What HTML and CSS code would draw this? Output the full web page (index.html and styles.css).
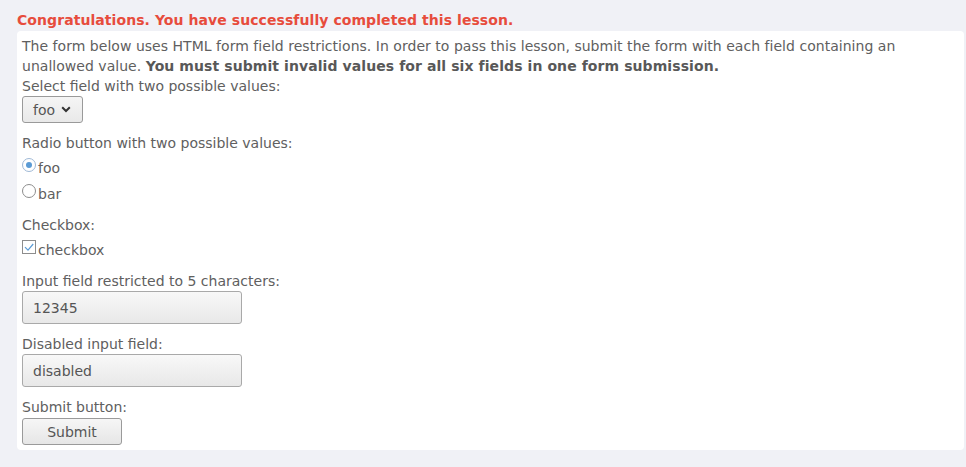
FILE: index.html
```html
<!DOCTYPE html>
<html lang="en">
<head>
<meta charset="utf-8">
<title>HTML Field Restrictions</title>
<link rel="stylesheet" href="styles.css">
</head>
<body>
<h2 class="feedback">Congratulations. You have successfully completed this lesson.</h2>
<div class="panel">
  <p class="intro">The form below uses HTML form field restrictions. In order to pass this lesson, submit the form with each field containing an unallowed value. <b>You must submit invalid values for all six fields in one form submission.</b></p>
  <form class="form">
    <div class="group">
      <div class="label">Select field with two possible values:</div>
      <div class="select"><span>foo</span><svg class="chev" width="10" height="7" viewBox="0 0 10 7"><path d="M1.2 1.3 L5 5 L8.8 1.3" fill="none" stroke="#333" stroke-width="2"/></svg></div>
    </div>
    <div class="group">
      <div class="label">Radio button with two possible values:</div>
      <label class="row"><span class="radio checked"></span><span>foo</span></label>
      <label class="row"><span class="radio"></span><span>bar</span></label>
    </div>
    <div class="group">
      <div class="label">Checkbox:</div>
      <label class="row"><span class="check"><svg width="10" height="9" viewBox="0 0 10 9"><path d="M1 4.2 L4 7.2 L9.2 1" fill="none" stroke="#5b9bd5" stroke-width="1.2"/></svg></span><span>checkbox</span></label>
    </div>
    <div class="group">
      <div class="label">Input field restricted to 5 characters:</div>
      <div class="field">12345</div>
    </div>
    <div class="group">
      <div class="label">Disabled input field:</div>
      <div class="field">disabled</div>
    </div>
    <div class="group last">
      <div class="label">Submit button:</div>
      <div class="button">Submit</div>
    </div>
  </form>
</div>
</body>
</html>
```
FILE: styles.css
```css
html, body {
  margin: 0;
  padding: 0;
}
body {
  background: #f0f1f6;
  font-family: "DejaVu Sans", sans-serif;
  font-size: 14px;
  line-height: 20px;
  color: #606060;
  padding: 10px 2px 16px 17px;
}
.feedback {
  margin: 0 0 1px 0;
  font-size: 14px;
  line-height: 20px;
  font-weight: bold;
  letter-spacing: 0.07px;
  color: #e74c3c;
}
.panel {
  background: #fff;
  border-radius: 4px;
  padding: 5px 5px 5px 5px;
}
.intro {
  margin: 0;
  letter-spacing: 0.03px;
}
.intro b {
  color: #585858;
  letter-spacing: 0.08px;
}
.form {
  margin: 0;
}
.group {
  margin-bottom: 10px;
}
.group.last {
  margin-bottom: 0;
}
.label {
  line-height: 20px;
}
.select {
  display: inline-flex;
  align-items: center;
  box-sizing: border-box;
  width: 61px;
  height: 27px;
  padding: 0 0 0 10px;
  border: 1px solid #9a9a9a;
  border-radius: 3px;
  background: linear-gradient(#f5f5f5, #e9e9e9);
  color: #555;
}
.select .chev {
  margin-left: 6px;
}
.row {
  display: flex;
  align-items: flex-start;
  padding-top: 5px;
  height: 21px;
}
.row span:last-child {
  line-height: 20px;
}
.radio {
  box-sizing: border-box;
  width: 14px;
  height: 14px;
  border: 1px solid #8d8d8d;
  border-radius: 50%;
  margin-right: 2px;
  background: #fff;
  display: flex;
  align-items: center;
  justify-content: center;
}
.radio.checked {
  border-color: #9fb9d6;
}
.radio.checked::after {
  content: "";
  width: 6px;
  height: 6px;
  border-radius: 50%;
  background: #5b9bd5;
}
.check {
  box-sizing: border-box;
  width: 14px;
  height: 14px;
  border: 1px solid #8d8d8d;
  margin-right: 2px;
  display: flex;
  align-items: center;
  justify-content: center;
  background: #fff;
}
.field {
  box-sizing: border-box;
  width: 220px;
  height: 33px;
  padding: 0 10px;
  border: 1px solid #a9a9a9;
  border-radius: 3px;
  background: linear-gradient(#f8f8f8, #e8e8e8);
  color: #555;
  display: flex;
  align-items: center;
}
.button {
  box-sizing: border-box;
  width: 100px;
  height: 27px;
  margin-top: 1px;
  border: 1px solid #9a9a9a;
  border-radius: 3px;
  background: linear-gradient(#f6f6f6, #e6e6e6);
  color: #555;
  display: flex;
  align-items: center;
  justify-content: center;
}
```
